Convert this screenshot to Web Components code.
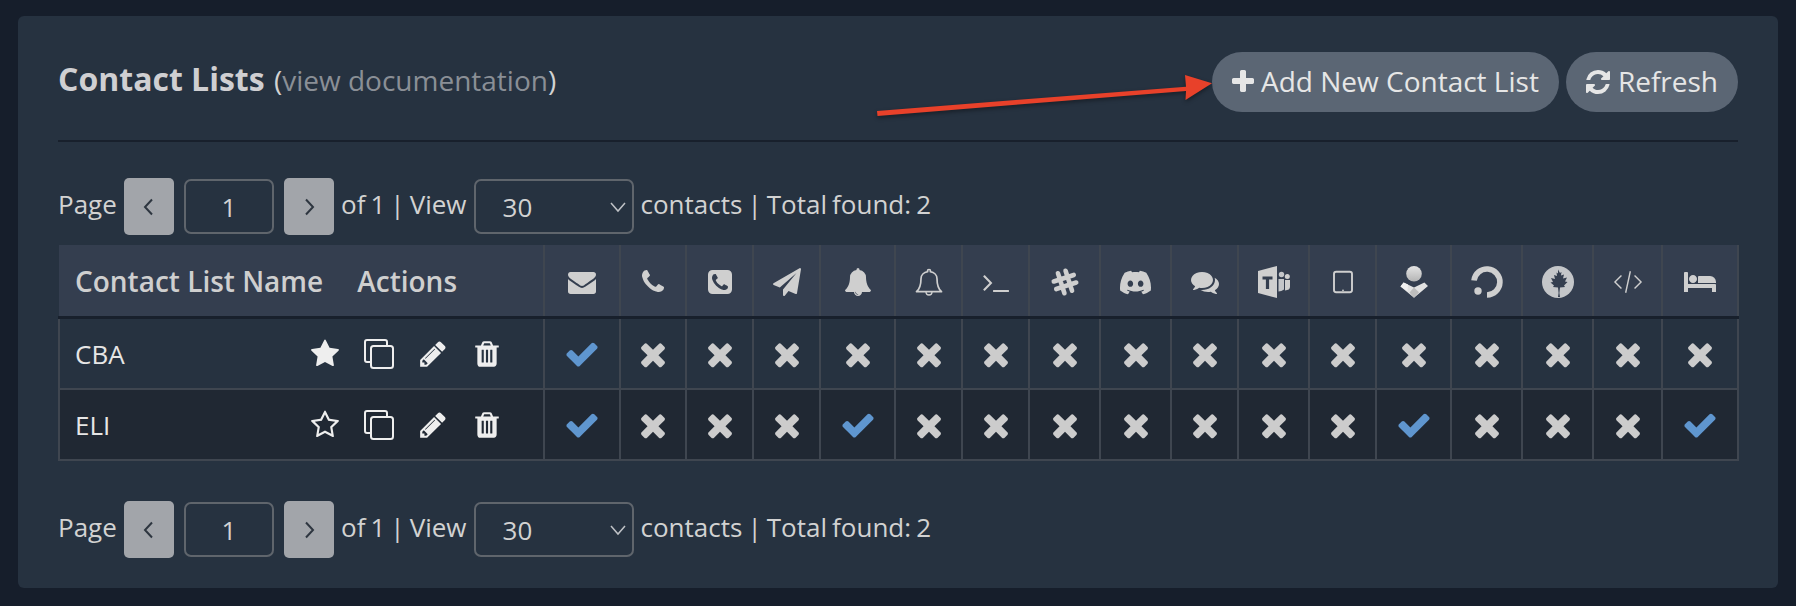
<!DOCTYPE html>
<html>
<head>
<meta charset="utf-8">
<title>Contact Lists</title>
<style>
  html, body { margin: 0; padding: 0; background: #161e2b; }
  body { font-family: "Open Sans", "Noto Sans", sans-serif; color: #d2d2d2; }
</style>
</head>
<body>
<contact-page>
  <contact-panel>
    <panel-header slot="header"></panel-header>
    <pager-bar total="2"></pager-bar>
    <contact-table></contact-table>
    <pager-bar total="2"></pager-bar>
  </contact-panel>
</contact-page>

<script>
// ========================================
// ICONS - 1792 box unless noted
// ========================================
const ICONS = {
    check: { d: 'M1671 566q0 40-28 68l-724 724-136 136q-28 28-68 28t-68-28l-136-136-362-362q-28-28-28-68t28-68l136-136q28-28 68-28t68 28l294 295 656-657q28-28 68-28t68 28l136 136q28 28 28 68z' },
    times: { d: 'M1490 1322q0 40-28 68l-136 136q-28 28-68 28t-68-28l-294-294-294 294q-28 28-68 28t-68-28l-136-136q-28-28-28-68t28-68l294-294-294-294q-28-28-28-68t28-68l136-136q28-28 68-28t68 28l294 294 294-294q28-28 68-28t68 28l136 136q28 28 28 68t-28 68l-294 294 294 294q28 28 28 68z' },
    plus: { d: 'M1600 736v192q0 40-28 68t-68 28h-416v416q0 40-28 68t-68 28h-192q-40 0-68-28t-28-68v-416h-416q-40 0-68-28t-28-68v-192q0-40 28-68t68-28h416v-416q0-40 28-68t68-28h192q40 0 68 28t28 68v416h416q40 0 68 28t28 68z' },
    refresh: { d: 'M1639 1056q0 5-1 7-64 268-268 434.5t-478 166.5q-146 0-282.5-55t-243.5-157l-129 129q-19 19-45 19t-45-19-19-45v-448q0-26 19-45t45-19h448q26 0 45 19t19 45-19 45l-137 137q71 66 161 102t187 36q134 0 250-65t186-179q11-17 53-117 8-23 30-23h192q13 0 22.5 9.5t9.5 22.5zm25-800v448q0 26-19 45t-45 19h-448q-26 0-45-19t-19-45 19-45l138-138q-148-137-349-137-134 0-250 65t-186 179q-11 17-53 117-8 23-30 23h-199q-13 0-22.5-9.5t-9.5-22.5v-7q65-268 270-434.5t480-166.5q146 0 284 55.5t245 156.5l130-129q19-19 45-19t45 19 19 45z' },
    envelope: { d: 'M1792 710v794q0 66-47 113t-113 47h-1472q-66 0-113-47t-47-113v-794q44 49 101 87 362 246 497 345 57 42 92.5 65.5t94.5 48 110 24.5h2q51 0 110-24.5t94.5-48 92.5-65.5q170-123 498-345 57-39 100-87zm0-294q0 79-49 151t-122 123q-376 261-468 325-10 7-42.5 30.5t-54 38-52 32.5-57.5 27-50 9h-2q-23 0-50-9t-57.5-27-52-32.5-54-38-42.5-30.5q-91-64-262-182.5t-205-142.5q-62-42-117-115.5t-55-136.5q0-78 41.5-130t118.5-52h1472q65 0 112.5 47t47.5 113z' },
    phone: { d: 'M1600 1240q0 27-10 70.5t-21 68.5q-21 50-122 106-94 51-186 51-27 0-53-3.5t-57.5-12.5-47-14.5-55.5-20.5-49-18q-98-35-175-83-127-79-264-216t-216-264q-48-77-83-175-3-9-18-49t-20.5-55.5-14.5-47-12.5-57.5-3.5-53q0-92 51-186 56-101 106-122 25-11 68.5-21t70.5-10q14 0 21 3 18 6 53 76 11 19 30 54t35 63.5 31 53.5q3 4 17.5 25t21.5 35.5 7 28.5q0 20-28.5 50t-62 55-62 53-28.5 46q0 9 5 22.5t8.5 20.5 14 24 11.5 19q76 137 174 235t235 174q2 1 19 11.5t24 14 20.5 8.5 22.5 5q18 0 46-28.5t53-62 55-62 50-28.5q14 0 28.5 7t35.5 21.5 25 17.5q25 15 53.5 31t63.5 35 54 30q70 35 76 53 3 7 3 21z' },
    phoneSquare: { d: 'M1408 1193q0-11-2-16t-18-16.5-40.5-25-47.5-26.5-45.5-25-28.5-15q-5-3-19-13t-25-15-21-5q-15 0-36.5 20.5t-39.5 45-38.5 45-33.5 20.5q-7 0-16.5-3.5t-15.5-6.5-17-9.5-14-8.5q-99-55-170-126.5t-127-170.5q-2-3-8.5-14t-9.5-17-6.5-15.5-3.5-16.5q0-13 20.5-33.5t45-38.5 45-39.5 20.5-36.5q0-10-5-21t-15-25-13-19q-3-6-15-28.5t-25-45.5-26.5-47.5-25-40.5-16.5-18-16-2q-48 0-101 22-46 21-80 94.5t-34 130.5q0 16 2.5 34t5 30.5 9 33 10 29.5 12.5 33 11 30q60 164 216.5 320.5t320.5 216.5q6 2 30 11t33 12.5 29.5 10 33 9 30.5 5 34 2.5q57 0 130.5-34t94.5-80q22-53 22-101zm256-777v960q0 119-84.5 203.5t-203.5 84.5h-960q-119 0-203.5-84.5t-84.5-203.5v-960q0-119 84.5-203.5t203.5-84.5h960q119 0 203.5 84.5t84.5 203.5z' },
    plane: { d: 'M1764 11q33 24 27 64l-256 1536q-5 29-32 45-14 8-31 8-11 0-24-5l-453-185-242 295q-18 23-49 23-13 0-22-4-19-7-30.5-23.5t-11.5-36.5v-349l864-1059-1069 925-395-162q-37-14-40-55-2-40 32-59l1664-960q15-9 32-9 20 0 36 11z' },
    bell: { d: 'M912 1696q0-16-16-16-59 0-101.5-42.5t-42.5-101.5q0-16-16-16t-16 16q0 73 51.5 124.5t124.5 51.5q16 0 16-16zm816-288q0 52-38 90t-90 38h-448q0 106-75 181t-181 75-181-75-75-181h-448q-52 0-90-38t-38-90q50-42 91-88t85-119.5 74.5-158.5 50-206 19.5-260q0-152 117-282.5t307-158.5q-8-19-8-39 0-40 28-68t68-28 68 28 28 68q0 20-8 39 190 28 307 158.5t117 282.5q0 139 19.5 260t50 206 74.5 158.5 85 119.5 91 88z' },
    terminal: { d: 'M649 983l-466 466q-10 10-23 10t-23-10l-50-50q-10-10-10-23t10-23l393-393-393-393q-10-10-10-23t10-23l50-50q10-10 23-10t23 10l466 466q10 10 10 23t-10 23zm1079 457v64q0 14-9 23t-23 9h-960q-14 0-23-9t-9-23v-64q0-14 9-23t23-9h960q14 0 23 9t9 23z' },
    comments: { d: 'M1408 768q0 139-94 257t-256.5 186.5-353.5 68.5q-86 0-176-16-124 88-278 128-36 9-86 16h-3q-11 0-20.5-8t-11.5-21q-1-3-1-6.5t.5-6.5 2-6l2.5-5 3.5-5.5 4-5 4.5-5 4-4.5q5-6 23-25t26-29.5 22.5-29 25-38.5 20.5-44q-124-72-195-177t-71-224q0-139 94-257t256.5-186.5 353.5-68.5 353.5 68.5 256.5 186.5 94 257zm384 256q0 120-71 224.5t-195 176.5q10 24 20.5 44t25 38.5 22.5 29 26 29.5 23 25q1 1 4 4.5t4.5 5 4 5 3.5 5.5l2.5 5 2 6 .5 6.5-1 6.5q-3 14-13 22t-22 7q-50-7-86-16-154-40-278-128-90 16-176 16-271 0-472-132 58 4 88 4 161 0 309-45t264-129q125-92 192-212t67-254q0-77-23-152 129 71 204 178t75 230z' },
    bed: { box: '0 0 2048 1792', d: 'M256 1024h1728q26 0 45 19t19 45v448h-256v-256h-1536v256h-256v-1216q0-26 19-45t45-19h128q26 0 45 19t19 45v704zm576-320q0-106-75-181t-181-75-181 75-75 181 75 181 181 75 181-75 75-181zm1216 256v-64q0-159-112.5-271.5t-271.5-112.5h-704q-26 0-45 19t-19 45v384h1152z' },
    star: { d: 'M1728 647q0 22-26 48l-363 354 86 500q1 7 1 20 0 21-10.5 35.5t-30.5 14.5q-19 0-40-12l-449-236-449 236q-22 12-40 12-21 0-31.5-14.5t-10.5-35.5q0-6 2-20l86-500-364-354q-25-27-25-48 0-37 56-46l502-73 225-455q19-41 49-41t49 41l225 455 502 73q56 9 56 46z' },
    starO: { d: 'M1201 1004l306-297-422-62-189-382-189 382-422 62 306 297-73 421 378-199 377 199zm527-357q0 22-26 48l-363 354 86 500q1 7 1 20 0 50-41 50-19 0-40-12l-449-236-449 236q-22 12-40 12-21 0-31.5-14.5t-10.5-35.5q0-6 2-20l86-500-364-354q-25-27-25-48 0-37 56-46l502-73 225-455q19-41 49-41t49 41l225 455 502 73q56 9 56 46z' },
    pencil: { d: 'M491 1536l91-91-235-235-91 91v107h128v128h107zm523-928q0-22-22-22-10 0-17 7l-542 542q-7 7-7 17 0 22 22 22 10 0 17-7l542-542q7-7 7-17zm-54-192l416 416-832 832h-416v-416zm683 96q0 53-37 90l-166 166-416-416 166-165q36-38 90-38 53 0 91 38l235 234q37 39 37 91z' },
    trash: { d: 'M704 1376v-704q0-14-9-23t-23-9h-64q-14 0-23 9t-9 23v704q0 14 9 23t23 9h64q14 0 23-9t9-23zm256 0v-704q0-14-9-23t-23-9h-64q-14 0-23 9t-9 23v704q0 14 9 23t23 9h64q14 0 23-9t9-23zm256 0v-704q0-14-9-23t-23-9h-64q-14 0-23 9t-9 23v704q0 14 9 23t23 9h64q14 0 23-9t9-23zm-544-992h448l-48-117q-7-9-17-11h-317q-10 2-17 11zm928 32v64q0 14-9 23t-23 9h-96v948q0 83-47 143.5t-113 60.5h-832q-66 0-113-58.5t-47-141.5v-952h-96q-14 0-23-9t-9-23v-64q0-14 9-23t23-9h309l70-167q15-37 54-63t79-26h320q40 0 79 26t54 63l70 167h309q14 0 23 9t9 23z' },
    discord: { box: '0 0 24 24', d: 'M20.317 4.37a19.79 19.79 0 00-4.885-1.515.074.074 0 00-.079.037c-.211.375-.445.865-.608 1.25-1.845-.276-3.68-.276-5.487 0-.164-.393-.406-.874-.618-1.25a.077.077 0 00-.079-.037 19.74 19.74 0 00-4.885 1.515.07.07 0 00-.032.028C.533 9.046-.319 13.58.099 18.058a.082.082 0 00.031.056c2.053 1.508 4.041 2.423 5.993 3.03a.078.078 0 00.084-.028c.462-.63.873-1.295 1.226-1.994a.076.076 0 00-.042-.106c-.653-.248-1.274-.55-1.872-.892a.077.077 0 01-.008-.128c.126-.094.252-.192.372-.291a.074.074 0 01.078-.011c3.928 1.793 8.18 1.793 12.061 0a.074.074 0 01.079.01c.12.099.246.198.373.292a.077.077 0 01-.007.128 12.3 12.3 0 01-1.873.891.077.077 0 00-.041.107c.36.698.772 1.363 1.225 1.993a.076.076 0 00.084.029c1.961-.607 3.95-1.522 6.002-3.03a.077.077 0 00.031-.055c.5-5.177-.838-9.674-3.548-13.66a.061.061 0 00-.031-.029zM8.02 15.331c-1.183 0-2.157-1.086-2.157-2.419 0-1.333.956-2.419 2.157-2.419 1.211 0 2.176 1.095 2.157 2.419 0 1.333-.956 2.419-2.157 2.419zm7.975 0c-1.183 0-2.157-1.086-2.157-2.419 0-1.333.955-2.419 2.157-2.419 1.21 0 2.176 1.095 2.157 2.419 0 1.333-.946 2.419-2.157 2.419z' }
};

// icons that are not a single filled path
const DRAWN = {
    bellO: `<svg viewBox="0 0 28 28"><path d="M14 1.500c-.9 0-1.500.6-1.500 1.500 0 .3 0 .5.2.7-3.800.6-6.700 3.500-6.700 7 0 6-1.500 10.300-4.500 13h25c-3-2.700-4.500-7-4.500-13 0-3.500-2.900-6.400-6.700-7 .2-.2.2-.4.2-.7 0-.9-.6-1.500-1.500-1.500z" fill="none" stroke="currentColor" stroke-width="1.700" stroke-linejoin="round"/><path d="M11 24a3 3 0 0 0 6 0" fill="none" stroke="currentColor" stroke-width="1.300"/></svg>`,
    copy: `<svg viewBox="0 0 30 30"><path d="M7 23H3a2 2 0 0 1-2-2V3a2 2 0 0 1 2-2h18a2 2 0 0 1 2 2v3" fill="none" stroke="currentColor" stroke-width="2"/><rect x="7" y="7" width="22" height="22" rx="2.500" fill="none" stroke="currentColor" stroke-width="2"/></svg>`,
    slack: `<svg viewBox="0 0 28 28"><g transform="rotate(-18 14 14)" stroke="currentColor" stroke-width="4.600" stroke-linecap="round"><path d="M10 3.500v21M18 3.500v21M3.500 10h21M3.500 18h21"/></g></svg>`,
    teams: `<svg viewBox="0 0 32 32"><path d="M0 5L19 0v32L0 27z" fill="currentColor"/><path d="M4.500 10.500h10v3h-3.400v9.500H7.900v-9.500H4.500z" fill="#343e4f"/><circle cx="23.500" cy="8.500" r="2.700" fill="#c4c6c9"/><circle cx="29.300" cy="10.500" r="2.500" fill="currentColor"/><path d="M20.500 13h5.500v10.500q-2.500 2-5.500 2z" fill="#c4c6c9"/><path d="M27 14h5v7q0 3-5 3.500z" fill="currentColor"/></svg>`,
    tablet: `<svg viewBox="0 0 28 28"><rect x="5" y="3.800" width="18" height="20.400" rx="2.200" fill="none" stroke="currentColor" stroke-width="1.900"/><circle cx="14" cy="22.300" r=".9" fill="currentColor"/></svg>`,
    opsgenie: `<svg viewBox="0 0 32 32"><defs><linearGradient id="og" x1="0" y1="0" x2="0" y2="1"><stop offset="0" stop-color="#e4e4e4"/><stop offset="1" stop-color="#b4b4b4"/></linearGradient></defs><circle cx="16" cy="7.800" r="7.800" fill="url(#og)"/><path d="M5.600 16.500L16 21.500l10.400-5L30 20 16 31.800 2.500 20.500z" fill="#e2e2e2"/><path d="M5.600 16.500l4.400 2.100-.5 6.300-7-4.400z" fill="#f0f0f0"/><path d="M16 21.500l-4.500 5 4.500 5.300 5-5.500z" fill="#bdbdbd"/></svg>`,
    ring: `<svg viewBox="0 0 32 32"><path d="M3 14.500A13 13 0 1 1 16 29" fill="none" stroke="currentColor" stroke-width="5.600"/><circle cx="7" cy="25" r="3.700" fill="currentColor"/></svg>`,
    leaf: `<svg viewBox="0 0 32 32"><circle cx="16" cy="16" r="16" fill="#c4c6c9"/><path d="M16 3.500l2 3.500 1.500-1-.5 3.500 3-1-1 4 4-1-2 4 2.500.5-3.500 3.500 1 1.500-5 .5-.6 5.500 .6 4h-2l.6-4-.6-5.500-5-.5 1-1.500L8.500 16.500l2.500-.5-2-4 4 1-1-4 3 1-.5-3.500 1.500 1z" fill="#343e4f"/></svg>`,
    code: `<svg viewBox="0 0 30 30"><path d="M8 8l-7 7 7 7M22 8l7 7-7 7M17.500 3.500L12.500 26.500" fill="none" stroke="currentColor" stroke-width="1.500"/></svg>`
};

class FaIcon extends HTMLElement {
    connectedCallback() {
        const size = this.getAttribute('size') || '28';
        const wide = this.getAttribute('width') || size;
        const name = this.getAttribute('name');
        const shadow = this.attachShadow({ mode: 'open' });
        let svg = DRAWN[name];
        if (!svg) {
            const icon = ICONS[name];
            svg = `<svg viewBox="${icon.box || '0 0 1792 1792'}"><path d="${icon.d}" fill="currentColor"/></svg>`;
        }
        shadow.innerHTML = `
      <style>
        :host { display: inline-flex; align-items: center; justify-content: center; width: ${wide}px; height: ${size}px; vertical-align: middle; }
        svg { display: block; width: ${wide}px; height: ${size}px; overflow: visible; }
      </style>${svg}`;
    }
}
customElements.define('fa-icon', FaIcon);

class ContactPage extends HTMLElement {
    constructor() {
        super();
        this.attachShadow({ mode: 'open' }).innerHTML = `
      <style>
        :host { display: block; padding: 16px 18px 18px; width: 1796px; height: 606px; box-sizing: border-box; overflow: hidden; }
      </style>
      <slot></slot>`;
    }
}
customElements.define('contact-page', ContactPage);

class ContactPanel extends HTMLElement {
    constructor() {
        super();
        this.attachShadow({ mode: 'open' }).innerHTML = `
      <style>
        :host { display: block; position: relative; background: #263240; border-radius: 6px; padding: 36px 40px 30px; height: 572px; box-sizing: border-box; font-size: 26px; }
        hr { border: 0; height: 2px; background: #18202c; margin: 28px 0 36px; }
        .arrow { position: absolute; left: 832px; top: 50px; }
        ::slotted(contact-table) { margin: 10px 0 40px; }
      </style>
      <slot name="header"></slot>
      <hr>
      <slot></slot>
      <svg class="arrow" width="380" height="100" viewBox="850 66 380 100">
        <path d="M877 111L1186 86.700 1185 75 1212 83.300 1185.500 100 1186 91 877.500 116z" fill="#e8412a" style="filter:drop-shadow(0 2px 2px rgba(0,0,0,.4))"/>
      </svg>`;
    }
}
customElements.define('contact-panel', ContactPanel);

class PillButton extends HTMLElement {
    constructor() {
        super();
        this.attachShadow({ mode: 'open' }).innerHTML = `
      <style>
        :host { display: inline-flex; align-items: center; gap: 4px; height: 60px; padding: 0 20px 0 17px; box-sizing: border-box; background: #5b6674; color: #e6e6e6; border-radius: 30px; font-size: 28px; white-space: nowrap; }
        ::slotted(span) { margin-top: -3px; }
      </style>
      <slot></slot>`;
    }
}
customElements.define('pill-button', PillButton);

class PanelHeader extends HTMLElement {
    constructor() {
        super();
        this.attachShadow({ mode: 'open' }).innerHTML = `
      <style>
        :host { display: flex; align-items: flex-start; justify-content: space-between; height: 60px; }
        .title { font-size: 28px; color: #d2d2d2; padding-top: 7px; line-height: 40px; }
        b { font-size: 32px; font-weight: 700; color: #cfcfd2; margin-right: 2px; }
        .link { color: #8a8f96; }
        .btns { display: flex; gap: 7px; }
      </style>
      <div class="title"><b>Contact Lists</b> (<span class="link">view documentation</span>)</div>
      <div class="btns">
        <pill-button><fa-icon name="plus" size="28"></fa-icon><span>Add New Contact List</span></pill-button>
        <pill-button style="gap:6px;padding:0 20px 0 18px"><fa-icon name="refresh" size="28"></fa-icon><span>Refresh</span></pill-button>
      </div>`;
    }
}
customElements.define('panel-header', PanelHeader);

class PagerBar extends HTMLElement {
    constructor() {
        super();
        const chev = (p) => `<svg width="12" height="20" viewBox="0 0 12 20"><path d="${p}" fill="none" stroke="#2e3640" stroke-width="2"/></svg>`;
        this.attachShadow({ mode: 'open' }).innerHTML = `
      <style>
        :host { display: flex; align-items: center; height: 57px; font-size: 26px; color: #d2d2d2; white-space: nowrap; word-spacing: -1.7px; }
        .btn { width: 50px; height: 57px; background: #a2a5aa; border-radius: 5px; display: flex; align-items: center; justify-content: center; flex: none; }
        .box { height: 55px; box-sizing: border-box; border: 2px solid #5f656c; border-radius: 7px; display: flex; align-items: center; flex: none; }
        .num { width: 90px; justify-content: center; margin: 0 10px; }
        .sel { width: 160px; padding: 0 0 0 27px; justify-content: space-between; margin: 0 7px; }
        .sel svg { margin: 0 5px 0 0; }
        .lbl { margin-top: -5px; }
        .page { width: 66px; }
        .of { margin-left: 7px; }
      </style>
      <span class="lbl page">Page</span>
      <div class="btn">${chev('M9 2.500L2 10l7 7.500')}</div>
      <div class="box num">1</div>
      <div class="btn">${chev('M3 2.500l7 7.500-7 7.500')}</div>
      <span class="lbl of">of 1 | View</span>
      <div class="box sel"><span>30</span><svg width="18" height="12" viewBox="0 0 18 12"><path d="M2 2l7 8 7-8" fill="none" stroke="#bfc2c6" stroke-width="1.500"/></svg></div>
      <span class="lbl">contacts | Total found: ${this.getAttribute('total')}</span>`;
    }
}
customElements.define('pager-bar', PagerBar);

class ContactTable extends HTMLElement {
    constructor() {
        super();
        const cols = [
            ['envelope', 76], ['phone', 66], ['phoneSquare', 67], ['plane', 67], ['bell', 75], ['bellO', 67],
            ['terminal', 67], ['slack', 71], ['discord', 71], ['comments', 67], ['teams', 71], ['tablet', 67],
            ['opsgenie', 75], ['ring', 71], ['leaf', 71], ['code', 69], ['bed', 76]
        ];
        const rows = [
            { name: 'CBA', star: 'star', on: [0] },
            { name: 'ELI', star: 'starO', on: [0, 4, 12, 16] }
        ];
        const sizes = { ring: 32, leaf: 32, opsgenie: 32, teams: 32, discord: 31, slack: 28 };
        const blurred = { slack: 1, discord: 1 };
        const head = cols.map(([n]) => `<th class="ic"><fa-icon name="${n}" size="${sizes[n] || 28}" ${n === 'bed' ? 'width="32"' : ''} ${blurred[n] ? 'style="filter:blur(.6px)"' : ''}></fa-icon></th>`).join('');
        const body = rows.map((r) => `
        <tr>
          <td class="name">${r.name}</td>
          <td class="acts"><div>
            <fa-icon name="${r.star}" size="30"></fa-icon>
            <fa-icon name="copy" size="30"></fa-icon>
            <fa-icon name="pencil" size="30"></fa-icon>
            <fa-icon name="trash" size="30"></fa-icon>
          </div></td>
          ${cols.map((c, i) => r.on.includes(i)
                ? '<td class="st on"><fa-icon name="check" size="36"></fa-icon></td>'
                : '<td class="st"><fa-icon name="times" size="36"></fa-icon></td>').join('')}
        </tr>`).join('');
        this.attachShadow({ mode: 'open' }).innerHTML = `
      <style>
        :host { display: block; font-size: 26px; }
        table { border-collapse: collapse; table-layout: fixed; width: 1680px; }
        th { background: #343e4f; height: 71px; padding: 0; border: 2px solid #3f4650; border-top: 0; border-bottom: 3px solid #18202c; color: #cfcfcf; font-weight: 600; font-size: 28px; }
        th.lead { border-left: 0; text-align: left; padding-left: 16px; white-space: nowrap; }
        th.lead span + span { margin-left: 34px; }
        th.ic { text-align: center; padding-bottom: 4px; height: 67px; }
        td { padding: 0; height: 69px; border: 2px solid #3f4650; text-align: center; }
        tr:nth-child(odd) td { background: #263240; }
        tr:nth-child(even) td { background: #202833; }
        td.name { text-align: left; padding-left: 15px; border-right: 0; color: #e6e6e6; }
        td.acts { border-left: 0; color: #eeeeee; }
        td.acts div { display: flex; gap: 24px; padding-left: 19px; }
        td.st { color: #cccccc; padding-bottom: 3px; height: 66px; }
        td.on { color: #5f96cf; }
      </style>
      <table>
        <colgroup>
          <col style="width:232px"><col style="width:253px">
          ${cols.map(([, w]) => `<col style="width:${w}px">`).join('')}
        </colgroup>
        <thead><tr><th class="lead" colspan="2"><span>Contact List Name</span><span>Actions</span></th>${head}</tr></thead>
        <tbody>${body}</tbody>
      </table>`;
    }
}
customElements.define('contact-table', ContactTable);
</script>
</body>
</html>
